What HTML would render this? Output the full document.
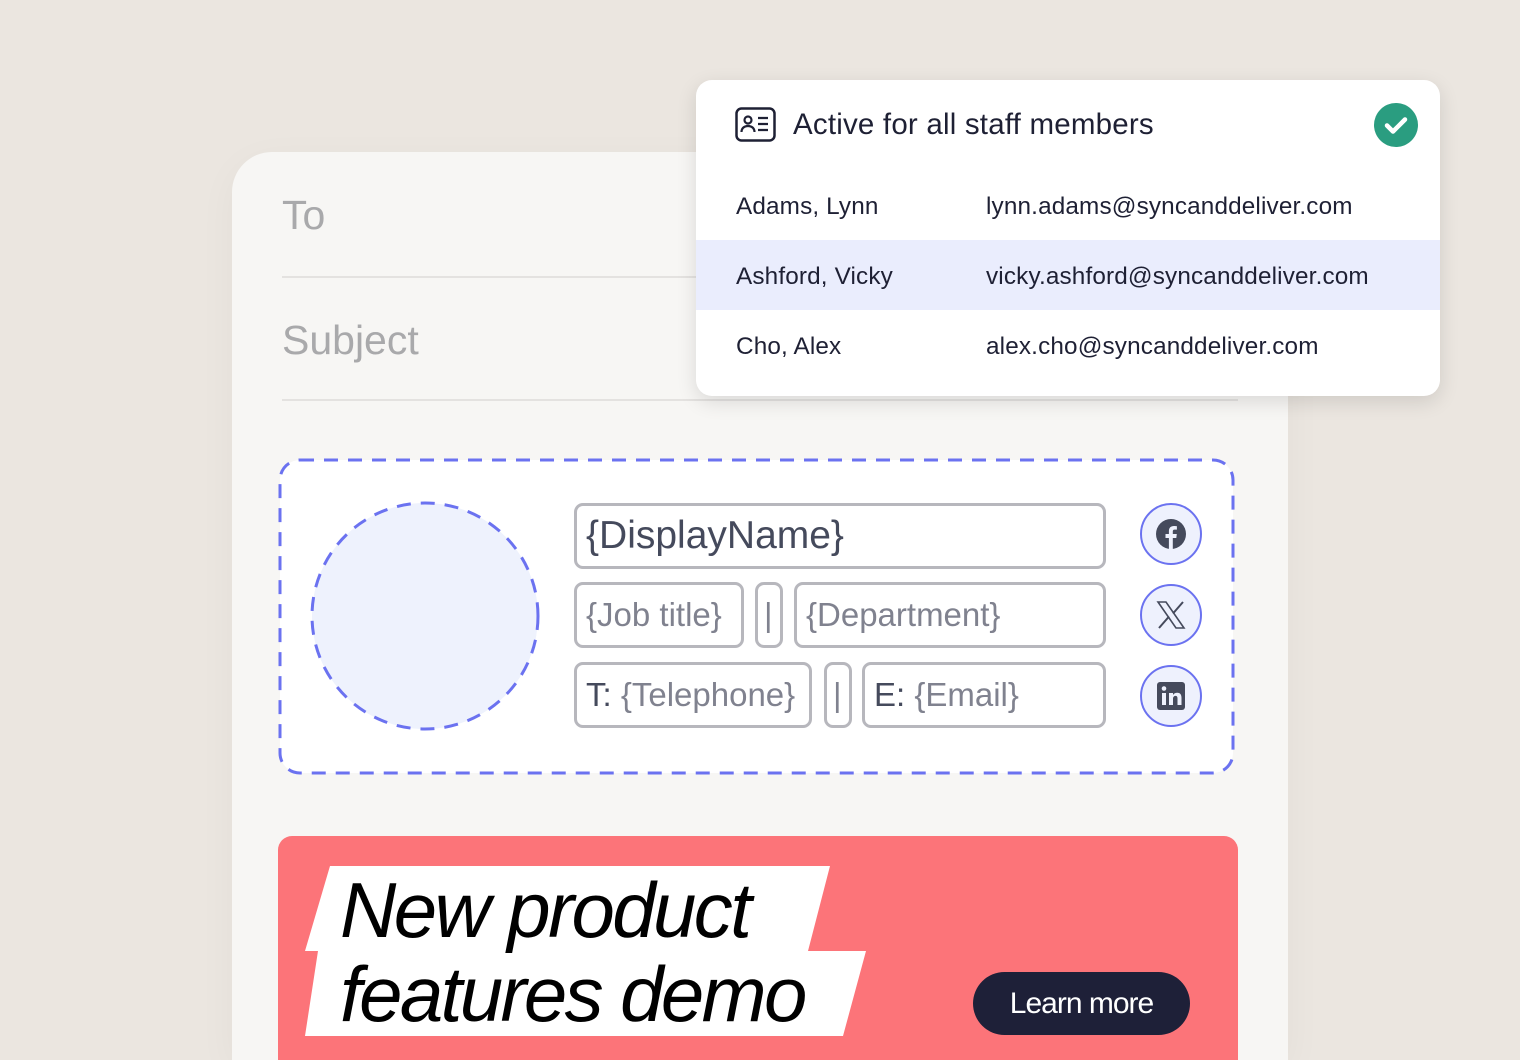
<!DOCTYPE html><html><head><style>
*{margin:0;padding:0;box-sizing:border-box}
html{height:1060px;overflow:hidden}
body{width:1520px;height:1060px;background:#ebe6e0;position:relative;overflow:hidden;font-family:"Liberation Sans",sans-serif}
.a{position:absolute}
.card{left:232px;top:152px;width:1056px;height:908px;background:#f7f6f4;border-radius:40px 40px 0 0;box-shadow:0 10px 40px rgba(0,0,0,.04)}
.ln{left:282px;width:956px;height:2px;background:#e4e2e0}
.ph{color:#a9a9ab;font-size:41px;left:282px}
.f{border:3px solid #b7b7bd;border-radius:9px;background:#fff;color:#80828f;font-size:33px;line-height:60px;padding-left:9px;white-space:nowrap;overflow:hidden;letter-spacing:0}
.f b{font-weight:normal;color:#454a5c}
.sc{width:62px;height:62px;border-radius:50%;border:2px solid #6b72f0;background:#eef1fd;left:1140px;display:flex;align-items:center;justify-content:center}
.pop{left:696px;top:80px;width:744px;height:316px;background:#fff;border-radius:16px;box-shadow:0 6px 20px rgba(0,0,0,.12);overflow:hidden}
.row{position:absolute;left:0;width:744px;height:70px;font-size:24.3px;color:#1e2034;line-height:74px;letter-spacing:.15px}
.row span{position:absolute;left:40px}.row i{font-style:normal;position:absolute;left:290px}
</style></head><body>
<div class="a card"></div>
<div class="a ph" style="top:192px">To</div>
<div class="a ln" style="top:276px"></div>
<div class="a ph" style="top:317px">Subject</div>
<div class="a ln" style="top:399px"></div>
<svg class="a" style="left:0;top:0" width="1520" height="1060">
<rect x="280" y="460" width="953" height="313" rx="20" fill="#fff" stroke="#6b72f0" stroke-width="3" stroke-dasharray="14 10"/>
<circle cx="425" cy="616" r="113" fill="#eef2fd" stroke="#6b72f0" stroke-width="3" stroke-dasharray="14 10"/>
</svg>
<div class="a f" style="left:574px;top:503px;width:532px;height:66px;font-size:39px;color:#454a5c">{DisplayName}</div>
<div class="a f" style="left:574px;top:582px;width:170px;height:66px">{Job title}</div>
<div class="a f" style="left:755px;top:582px;width:28px;height:66px;padding-left:6px">|</div>
<div class="a f" style="left:794px;top:582px;width:312px;height:66px">{Department}</div>
<div class="a f" style="left:574px;top:662px;width:238px;height:66px"><b>T:</b> {Telephone}</div>
<div class="a f" style="left:824px;top:662px;width:28px;height:66px;padding-left:6px">|</div>
<div class="a f" style="left:862px;top:662px;width:244px;height:66px"><b>E:</b> {Email}</div>
<div class="a sc" style="top:503px"><svg width="32" height="32" viewBox="0 0 32 32"><circle cx="16" cy="16" r="15" fill="#454a5c"/><path d="M17.8 31V20h3.5l.5-4h-4v-2.5c0-1.1.4-1.9 2-1.9h2.1V8.2c-.4 0-1.6-.2-3-.2-3 0-5 1.8-5 5.1V16h-3.4v4h3.4v11z" fill="#eef1fd"/></svg></div>
<div class="a sc" style="top:584px"><svg width="32" height="32" viewBox="0 0 32 32"><path d="M3 3h8l18 26h-8z" fill="none" stroke="#454a5c" stroke-width="1.6"/><path d="M28 3L18 14.5M4 29l10-11.5" stroke="#454a5c" stroke-width="2"/></svg></div>
<div class="a sc" style="top:665px"><svg width="30" height="30" viewBox="0 0 30 30"><rect x="1" y="1" width="28" height="28" rx="3" fill="#454a5c"/><rect x="6" y="12" width="4" height="12" fill="#eef1fd"/><circle cx="8" cy="7.5" r="2.3" fill="#eef1fd"/><path d="M13 12h4v2c1-1.6 2.5-2.3 4.3-2.3 3 0 4.2 2 4.2 5V24h-4v-6.5c0-1.600-.5-2.6-1.9-2.6s-2.6 1-2.6 2.8V24h-4z" fill="#eef1fd"/></svg></div>
<div class="a" style="left:278px;top:836px;width:960px;height:224px;background:#fc7479;border-radius:14px 14px 0 0"></div>
<svg class="a" style="left:0;top:0" width="1520" height="1060"><polygon points="330,866 830,866 808,951 866,951 843,1036 305,1036 318,951 305,951" fill="#fff"/></svg>
<div class="a" style="left:340px;top:868px;font-size:78px;font-style:italic;letter-spacing:-2.6px;line-height:84px;color:#000;white-space:nowrap">New product<br>features demo</div>
<div class="a" style="left:973px;top:972px;width:217px;height:63px;background:#1e2038;border-radius:32px;color:#fff;font-size:30px;letter-spacing:-1px;text-align:center;line-height:63px">Learn more</div>
<div class="a pop">
<svg class="a" style="left:39px;top:27px" width="42" height="36" viewBox="0 0 42 36"><rect x="1.5" y="1.5" width="38" height="32" rx="5" fill="none" stroke="#1e2034" stroke-width="2.5"/><circle cx="13" cy="13" r="3.5" fill="none" stroke="#1e2034" stroke-width="2.2"/><path d="M6.5 25c0-4 3-6 6.5-6s6.5 2 6.5 6" fill="none" stroke="#1e2034" stroke-width="2.2"/><path d="M23 11h10M23 17h10M23 23h10" stroke="#1e2034" stroke-width="2.2"/></svg>
<div class="a" style="left:97px;top:28px;font-size:29.5px;color:#1e2034;letter-spacing:.2px">Active for all staff members</div>
<svg class="a" style="left:678px;top:23px" width="44" height="44"><circle cx="22" cy="22" r="22" fill="#2a9d80"/><path d="M13 22.5l6 6 12-12" fill="none" stroke="#fff" stroke-width="4.5" stroke-linecap="round" stroke-linejoin="round"/></svg>
<div class="row" style="top:90px"><span>Adams, Lynn</span><i>lynn.adams@syncanddeliver.com</i></div>
<div class="row" style="top:160px;background:#eaedfd"><span>Ashford, Vicky</span><i>vicky.ashford@syncanddeliver.com</i></div>
<div class="row" style="top:230px"><span>Cho, Alex</span><i>alex.cho@syncanddeliver.com</i></div>
</div>
</body></html>
